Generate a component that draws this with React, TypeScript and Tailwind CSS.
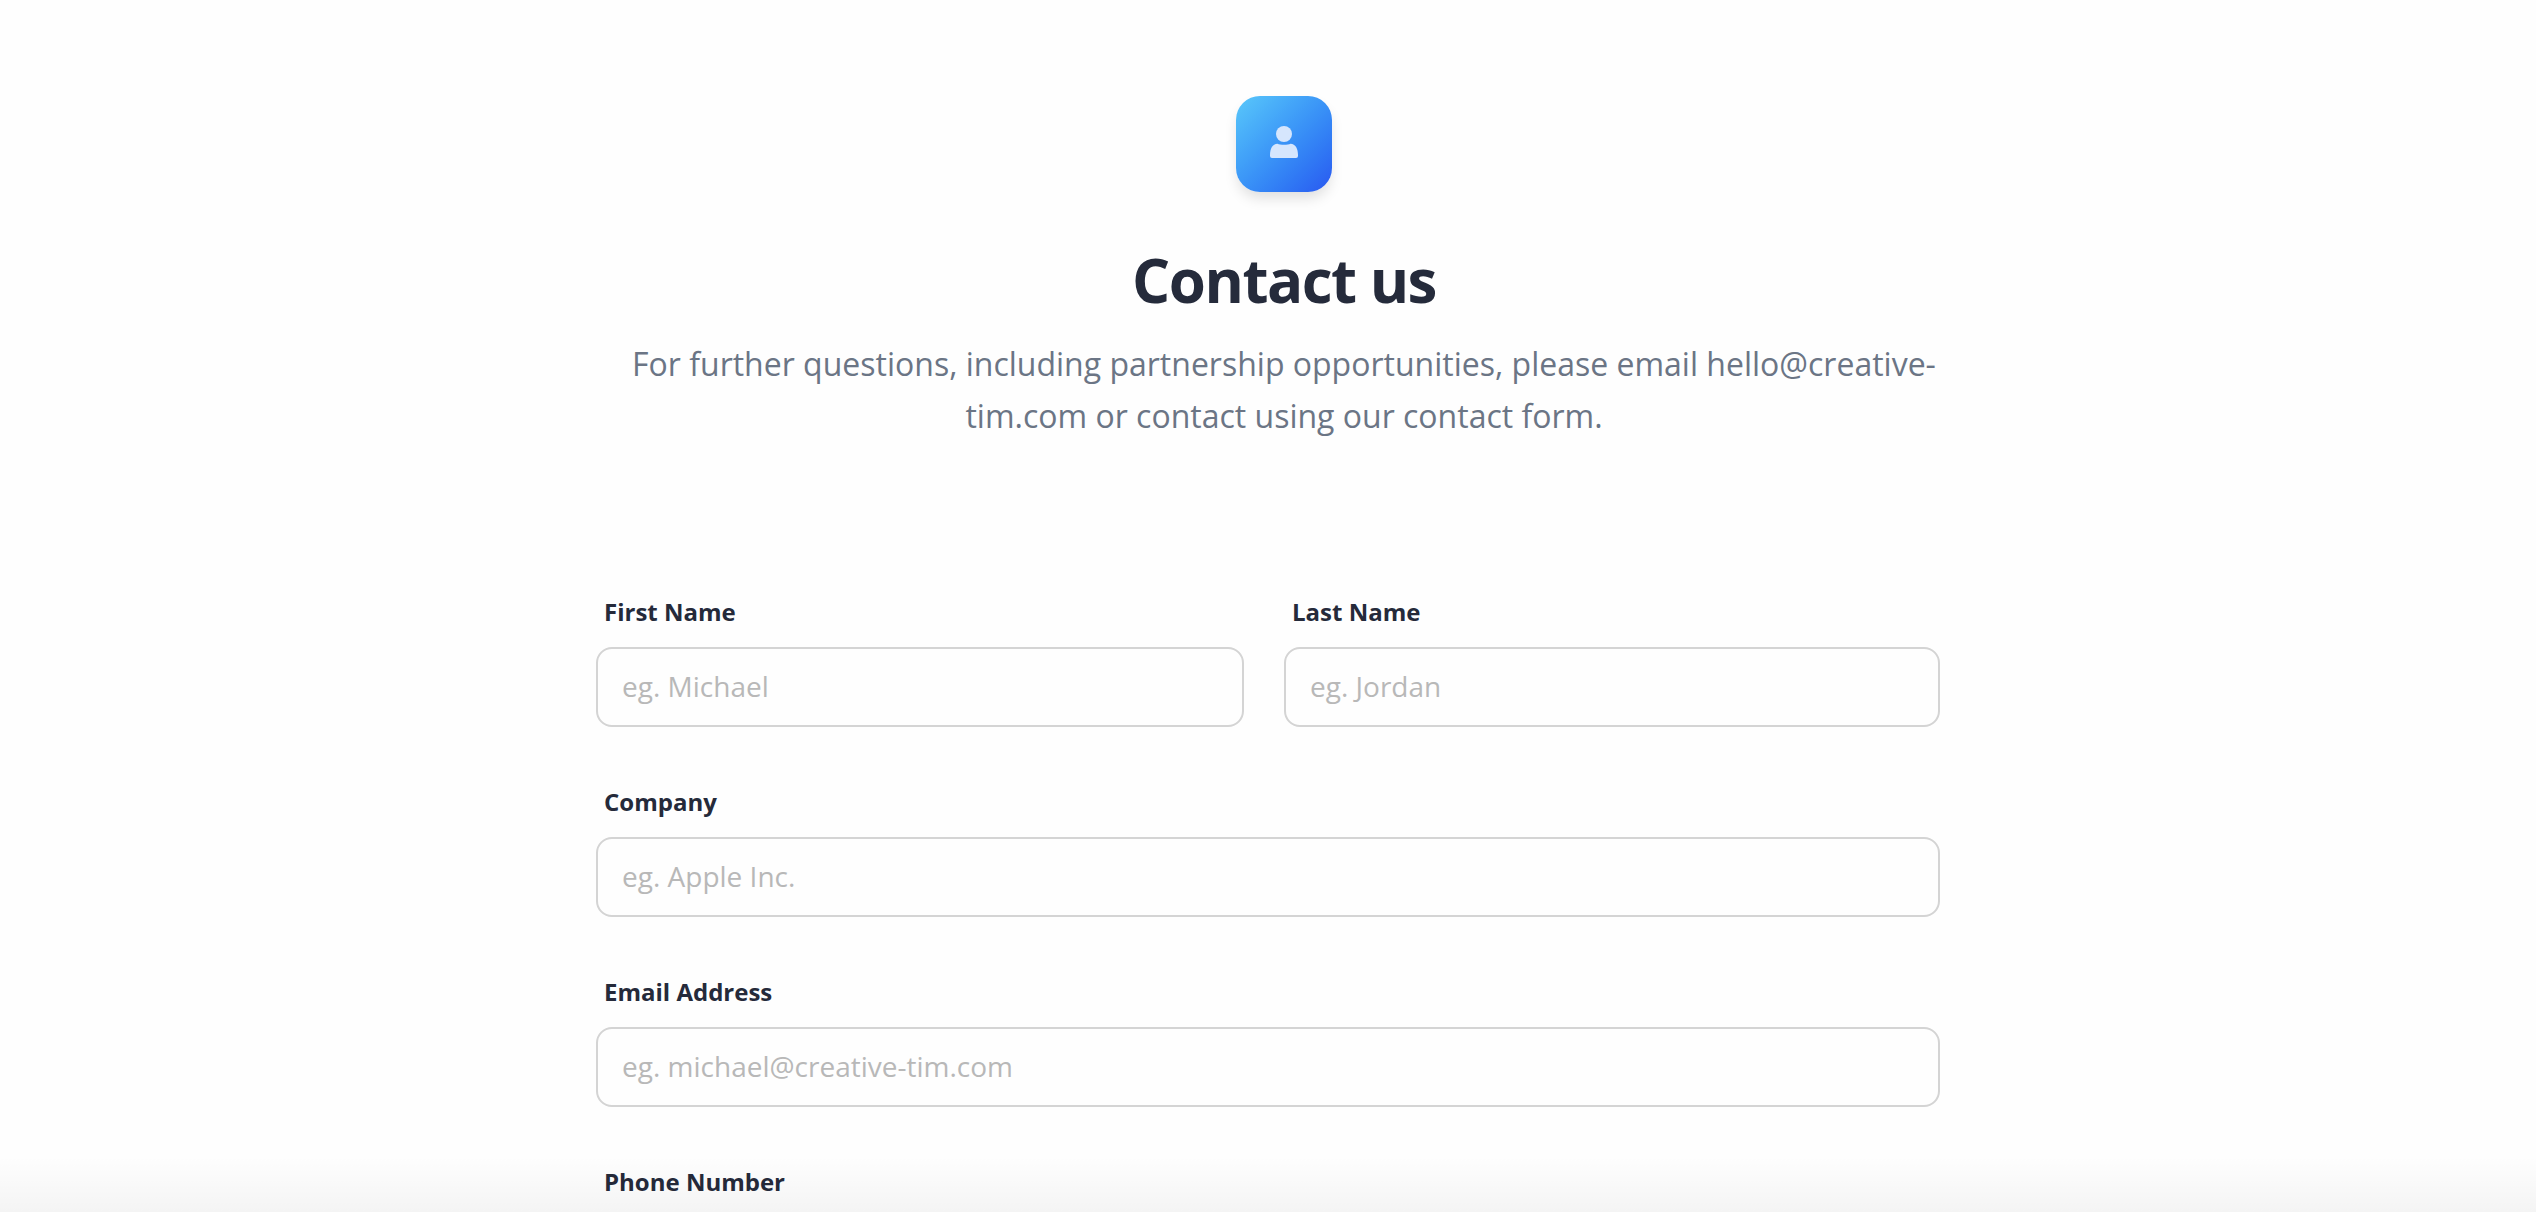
import React from "react";

type FieldProps = { id: string; label: string; placeholder: string; type?: string };

function Field({ id, label, placeholder, type = "text" }: FieldProps) {
  return (
    <div className="flex w-full flex-col gap-5">
      <label htmlFor={id} className="ml-2 text-[24px] leading-[30px] font-bold text-[#252a3a]">
        {label}
      </label>
      <input
        id={id}
        type={type}
        placeholder={placeholder}
        className="h-20 w-full rounded-2xl border-2 border-[#d4d4d4] bg-[#fefefe] px-6 pb-0.5 text-[28px] font-normal text-[#495057] outline-none placeholder:text-[#b8b8b8]"
      />
    </div>
  );
}

export default function App() {
  return (
    <main className="relative h-screen overflow-hidden bg-[#fefefe] font-['Open_Sans',sans-serif]">
      <header className="mx-auto flex w-full max-w-[1376px] flex-col items-center pt-24 pl-8 text-center">
        <div className="flex size-24 items-center justify-center rounded-3xl bg-linear-to-br from-[#5ac8fa] to-[#2b57f0] pb-1 shadow-[0_8px_14px_-2px_rgba(0,0,0,0.13)]">
          <svg viewBox="0 0 32 32" className="size-8" fill="#d6e6fd" aria-hidden="true">
            <circle cx="16" cy="8" r="8" />
            <path d="M9.500 17.800C12 19.200 20 19.200 22.500 17.800C27.500 18.300 30 22.500 30 29V30Q30 32 28 32H4Q2 32 2 30V29C2 22.500 4.500 18.300 9.500 17.800Z" />
          </svg>
        </div>
        <h1 className="mt-[54px] text-[60px] leading-[68px] font-bold tracking-tight text-[#252b3b]">Contact us</h1>
        <p className="mt-6 text-[32px] leading-[52px] text-[#6b7585]">
          For further questions, including partnership opportunities, please email hello@creative-tim.com or contact using our contact form.
        </p>
      </header>
      <form className="mx-auto mt-[155px] flex w-full max-w-[1344px] flex-col gap-[60px]">
        <div className="grid grid-cols-[648fr_656fr] gap-10">
          <Field id="first" label="First Name" placeholder="eg. Michael" />
          <Field id="last" label="Last Name" placeholder="eg. Jordan" />
        </div>
        <Field id="company" label="Company" placeholder="eg. Apple Inc." />
        <Field id="email" label="Email Address" placeholder="eg. michael@creative-tim.com" type="email" />
        <Field id="phone" label="Phone Number" placeholder="eg. +1 234 567 890" type="tel" />
      </form>
      <div className="pointer-events-none absolute inset-x-0 bottom-0 h-14 bg-linear-to-b from-transparent to-black/4" />
    </main>
  );
}
